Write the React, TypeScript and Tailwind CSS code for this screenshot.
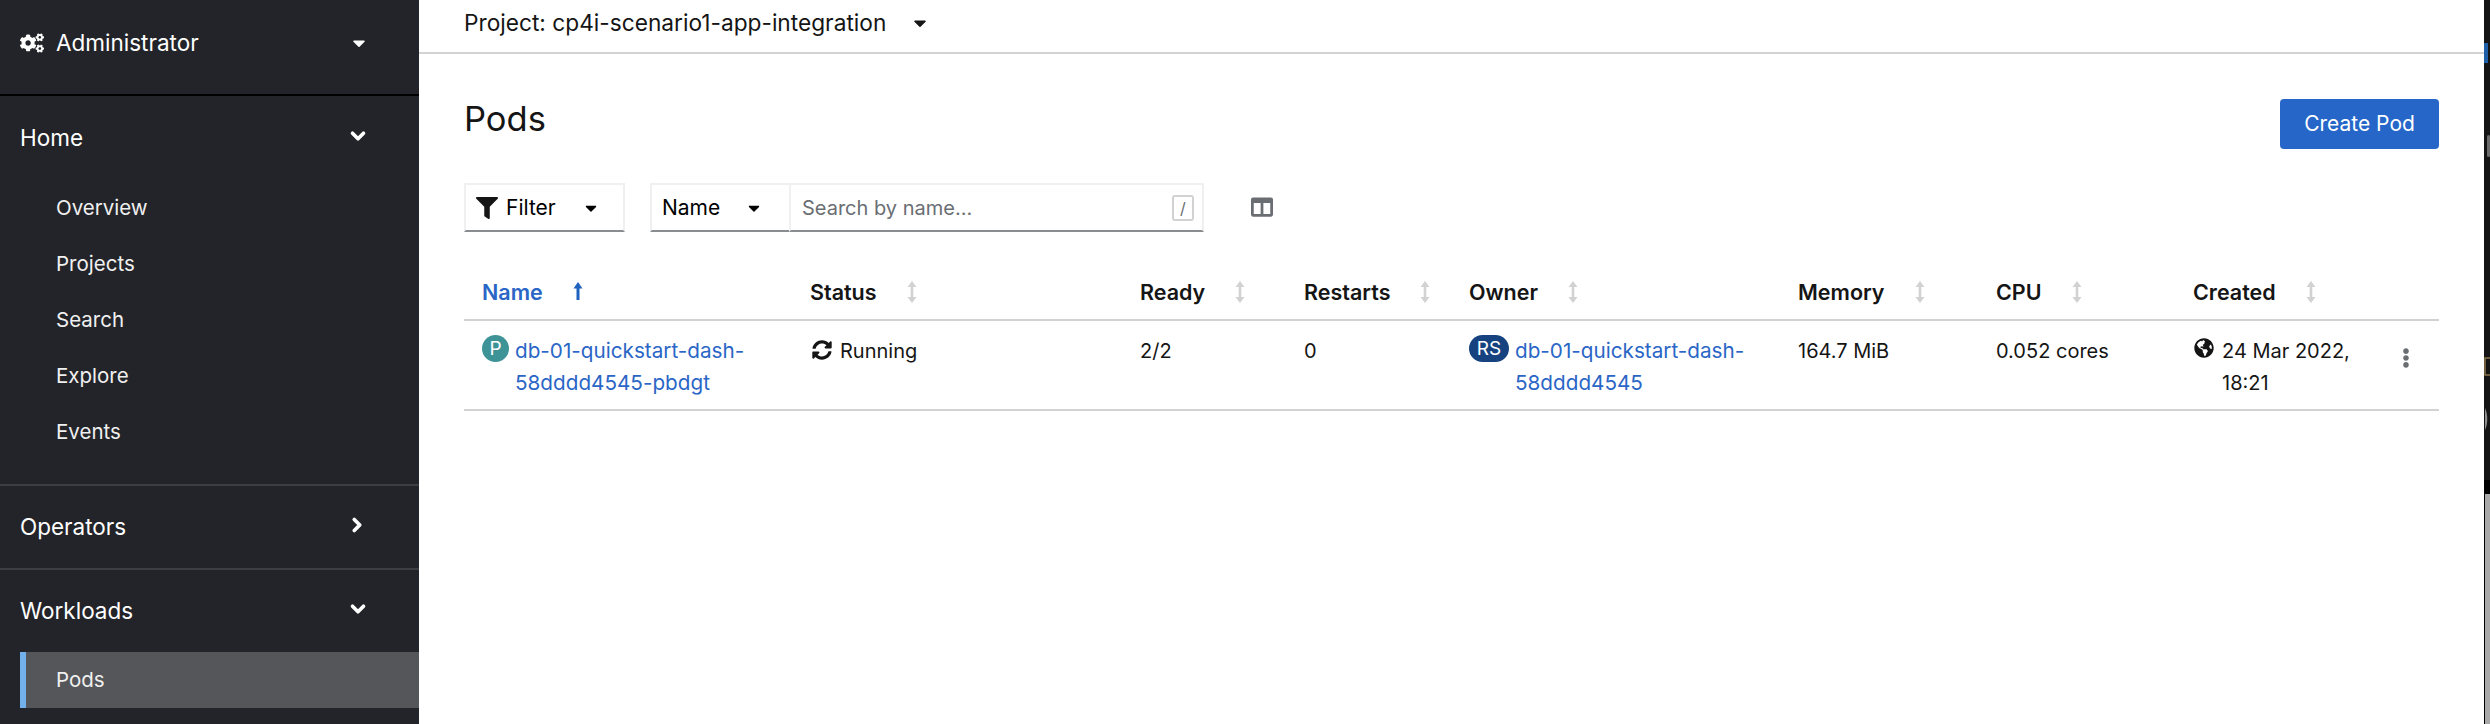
import { ChevronDown, ChevronRight } from "lucide-react";
import { FaCaretDown, FaCogs, FaFilter, FaGlobeAmericas, FaSyncAlt, FaColumns, FaEllipsisV } from "react-icons/fa";

const font = { fontFamily: 'Inter, sans-serif' };

function SortIcon({ className }: { className: string }) {
  return (
    <svg viewBox="0 0 10 22" className={className} fill="currentColor">
      <path d="M5 0 9.5 6H6.3v10h3.2L5 22 .5 16h3.2V6H.5z" />
    </svg>
  );
}

function UpArrow() {
  return (
    <svg viewBox="0 0 10 18" className="w-[10px] h-[18px] text-[#1f62c0]" fill="currentColor">
      <path d="M5 0 9.5 6.5H6.5V18h-3V6.5H.5z" />
    </svg>
  );
}

function Header({ label, className, active }: { label: string; className: string; active?: boolean }) {
  return (
    <div className={`flex items-center ${className}`}>
      <span className={`text-[21.5px] font-semibold ${active ? "text-[#2a66c6]" : "text-[#151515]"}`}>{label}</span>
      {active ? (
        <span className="ml-[30px] flex mb-[4px]"><UpArrow /></span>
      ) : (
        <span className="ml-[30px] flex mb-[2px]"><SortIcon className="w-[10px] h-[22px] text-[#d2d2d2]" /></span>
      )}
    </div>
  );
}

function SubItem({ label }: { label: string }) {
  return <div className="h-[56px] pl-[56px] flex items-center text-[20.5px] text-[#f0f0f0]">{label}</div>;
}

function Sidebar() {
  return (
    <aside className="w-[419px] shrink-0 h-full bg-[#232429] text-white overflow-hidden">
      <div className="h-[96px] flex items-center pl-[20px] pr-[50px] pb-[8px] border-b-2 border-black">
        <FaCogs className="w-[24px] h-[20px]" />
        <span className="ml-[12px] text-[22.5px] flex-1">Administrator</span>
        <FaCaretDown className="w-[20px] h-[20px]" />
      </div>
      <div className="h-[84px] flex items-center pl-[20px] pr-[50px]">
        <span className="text-[22.5px] flex-1">Home</span>
        <ChevronDown className="w-[22px] h-[22px] mb-[4px]" strokeWidth={4} />
      </div>
      <SubItem label="Overview" />
      <SubItem label="Projects" />
      <SubItem label="Search" />
      <SubItem label="Explore" />
      <SubItem label="Events" />
      <div className="h-[84px] mt-[24px] flex items-center pl-[20px] pr-[50px] border-t-2 border-[#3c3f42]">
        <span className="text-[22.5px] flex-1">Operators</span>
        <ChevronRight className="w-[22px] h-[22px] mb-[4px] mr-[1px]" strokeWidth={4} />
      </div>
      <div className="h-[84px] flex items-center pl-[20px] pr-[50px] border-t-2 border-[#3c3f42]">
        <span className="text-[22.5px] flex-1">Workloads</span>
        <ChevronDown className="w-[22px] h-[22px] mb-[4px]" strokeWidth={4} />
      </div>
      <div className="ml-[20px] h-[56px] flex items-center bg-[#55565a] border-l-[6px] border-[#73b1ec] pl-[30px] text-[20.5px] text-[#f0f0f0]">
        Pods
      </div>
    </aside>
  );
}

function Table() {
  return (
    <div className="mt-[34px]">
      <div className="h-[55px] flex border-b-2 border-[#d2d2d2]">
        <Header label="Name" active className="w-[328px] pl-[18px]" />
        <Header label="Status" className="w-[330px] pl-[18px]" />
        <Header label="Ready" className="w-[164px] pl-[18px]" />
        <Header label="Restarts" className="w-[165px] pl-[18px]" />
        <Header label="Owner" className="w-[329px] pl-[18px]" />
        <Header label="Memory" className="w-[198px] pl-[18px]" />
        <Header label="CPU" className="w-[197px] pl-[18px]" />
        <Header label="Created" className="flex-1 pl-[18px]" />
      </div>
      <div className="h-[90px] flex border-b-2 border-[#d2d2d2] pt-[14px] text-[20px] leading-[32px] text-[#151515]">
        <div className="w-[328px] pl-[18px] flex items-start">
          <span className="w-[27px] h-[27px] shrink-0 rounded-full bg-[#3e9397] text-white text-[19px] leading-[27px] text-center">P</span>
          <span className="ml-[6px] text-[20.7px] text-[#2a66c6]">db-01-quickstart-dash-<br />58dddd4545-pbdgt</span>
        </div>
        <div className="w-[330px] pl-[20px] flex items-start">
          <FaSyncAlt className="mt-[5px] w-[20px] h-[20px]" />
          <span className="ml-[8px]">Running</span>
        </div>
        <div className="w-[164px] pl-[18px]">2/2</div>
        <div className="w-[165px] pl-[18px]">0</div>
        <div className="w-[329px] pl-[18px] flex items-start">
          <span className="w-[40px] h-[27px] shrink-0 rounded-full bg-[#164380] text-white text-[19px] leading-[27px] text-center">RS</span>
          <span className="ml-[6px] text-[20.7px] text-[#2a66c6]">db-01-quickstart-dash-<br />58dddd4545</span>
        </div>
        <div className="w-[198px] pl-[18px]">164.7 MiB</div>
        <div className="w-[197px] pl-[18px]">0.052 cores</div>
        <div className="flex-1 pl-[19px] flex items-start relative">
          <FaGlobeAmericas className="mt-[3px] w-[20px] h-[20px]" />
          <span className="ml-[8px]">24 Mar 2022,<br />18:21</span>
          <FaEllipsisV className="absolute right-[26px] top-[13px] w-[14px] h-[20px] text-[#6a6e73]" />
        </div>
      </div>
    </div>
  );
}

// sliver of the next window at the right edge of the capture
function EdgeStrip() {
  return (
    <div className="w-[6px] shrink-0 flex flex-col bg-[#141414]">
      <svg viewBox="0 0 6 480" className="w-[6px] h-[480px]">
        <rect x="0" y="43" width="4" height="20" fill="#1f5fa8" />
        <rect x="3" y="135" width="3" height="22" rx="1.5" fill="#6b6b6b" />
        <path d="M6 358H1v17h5" fill="none" stroke="#8a7448" strokeWidth="1.5" />
        <path d="M1 408c3 6 3 16 0 22z" fill="#8f8f8f" />
      </svg>
      <div className="h-[14px] bg-black" />
      <div className="flex-1 bg-[#a9a9a9] border-l border-black" />
    </div>
  );
}

export default function App() {
  return (
    <div className="w-[2490px] h-[724px] flex overflow-hidden bg-white" style={font}>
      <Sidebar />
      <main className="flex-1 min-w-0 flex flex-col">
        <div className="h-[54px] shrink-0 flex items-center pl-[45px] pb-[6px] border-b-2 border-[#d2d2d2] text-[22.7px] text-[#151515]">
          <span>Project: cp4i-scenario1-app-integration</span>
          <FaCaretDown className="ml-[24px] w-[20px] h-[20px]" />
        </div>
        <div className="pl-[45px] pr-[45px]">
          <div className="mt-[45px] flex items-start justify-between">
            <h1 className="text-[34.5px] leading-[40px] text-[#151515]">Pods</h1>
            <button className="w-[159px] h-[50px] rounded-[4px] bg-[#2566c8] text-white text-[21px]">Create Pod</button>
          </div>
          <div className="mt-[34px] flex items-stretch h-[49px]">
            <div className="w-[161px] flex items-center border-t-2 border-x-2 border-[#f0f0f0] border-b-2 border-b-[#8a8d90] pl-[10px]">
              <FaFilter className="w-[22px] h-[22px] text-[#151515]" />
              <span className="ml-[8px] text-[21px]">Filter</span>
              <FaCaretDown className="ml-[26px] w-[18px] h-[18px]" />
            </div>
            <div className="ml-[25px] w-[139px] flex items-center border-t-2 border-l-2 border-[#f0f0f0] border-b-2 border-b-[#8a8d90] pl-[10px]">
              <span className="text-[21px]">Name</span>
              <FaCaretDown className="ml-[25px] w-[18px] h-[18px]" />
            </div>
            <div className="w-[415px] flex items-center justify-between border-t-2 border-x-2 border-[#f0f0f0] border-b-2 border-b-[#8a8d90] pl-[11px] pr-[8px]">
              <span className="text-[20px] text-[#6a6e73]">Search by name...</span>
              <span className="w-[22px] h-[26px] rounded-[3px] border-2 border-[#d2d2d2] text-[16px] leading-[22px] text-center text-[#6a6e73]">/</span>
            </div>
            <div className="ml-[47px] flex items-center pb-[2px]">
              <FaColumns className="w-[22px] h-[22px] text-[#6a6e73]" />
            </div>
          </div>
          <Table />
        </div>
      </main>
      <EdgeStrip />
    </div>
  );
}
